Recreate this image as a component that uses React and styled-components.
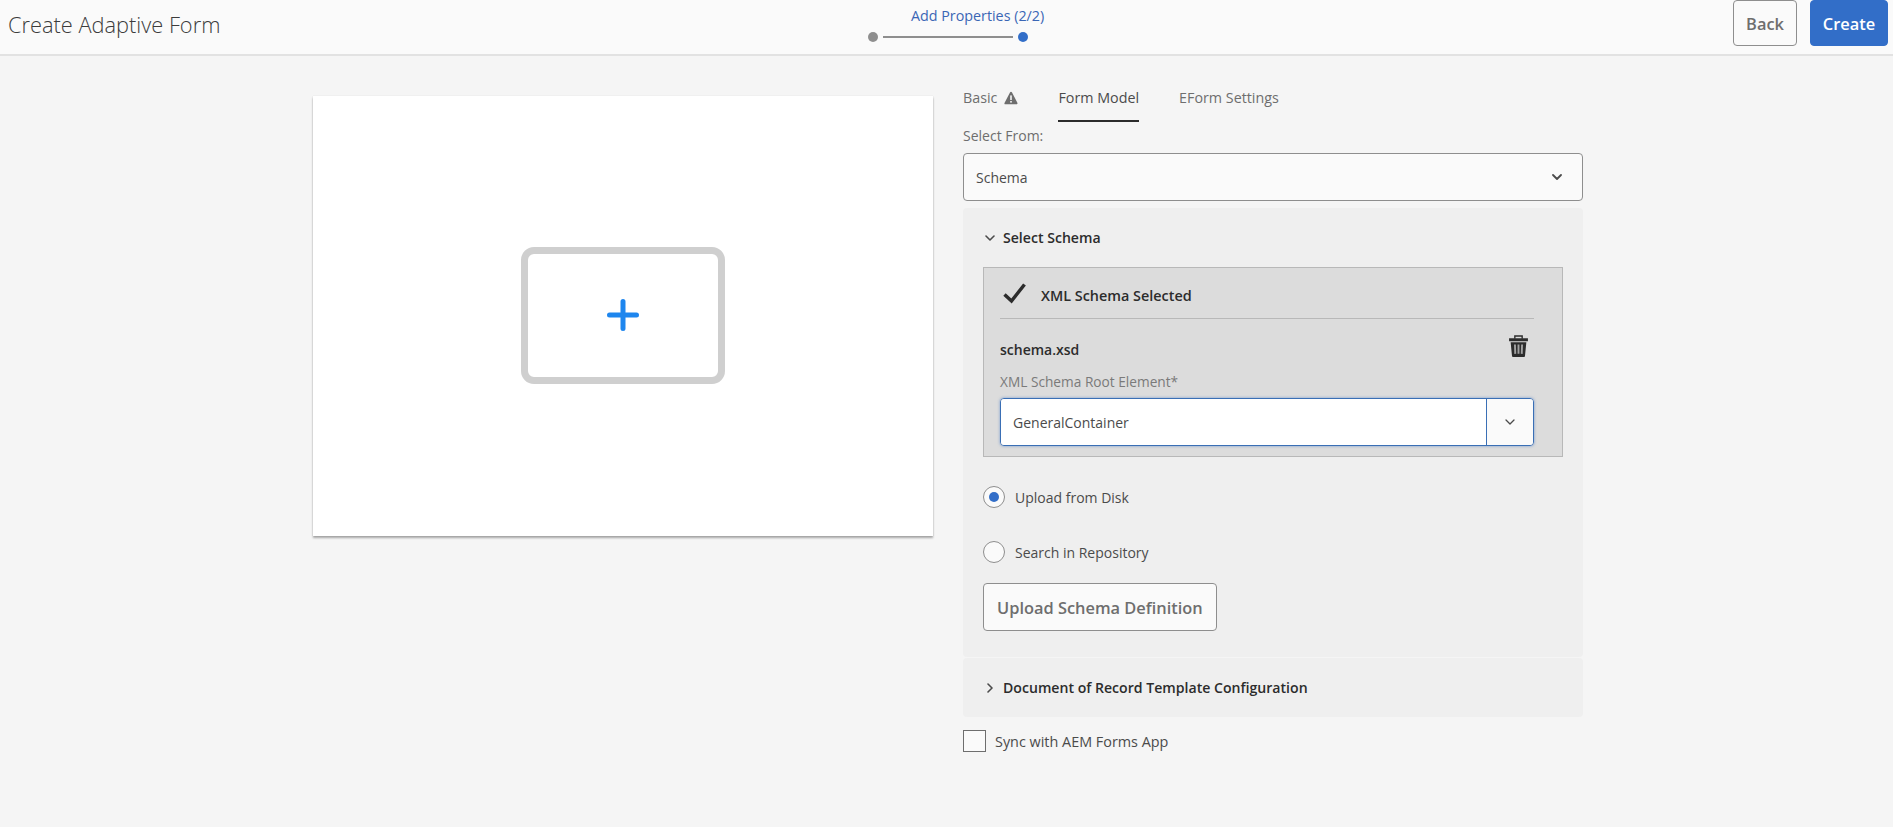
import React from 'react'
import styled, { createGlobalStyle } from 'styled-components'

const GlobalStyle = createGlobalStyle`
  html, body {
    margin: 0;
    padding: 0;
    background: #f5f5f5;
  }
  body {
    font-family: "Open Sans", "Liberation Sans", sans-serif;
    font-size: 14px;
    color: #4b4b4b;
  }
`

const Page = styled.div`
  width: 1893px;
  height: 827px;
  overflow: hidden;
  background: #f5f5f5;
`

const Header = styled.header`
  position: relative;
  height: 54px;
  display: flex;
  align-items: flex-start;
  justify-content: space-between;
  padding: 0 5px 0 8px;
  background: #fafafa;
  border-bottom: 2px solid #e2e2e2;
`

const Title = styled.h1`
  margin: 10px 0 0;
  font-size: 21.8px;
  line-height: 30px;
  font-weight: 300;
  color: #3c3c3c;
`

const Stepper = styled.div`
  position: absolute;
  left: 868px;
  top: 6px;
  width: 160px;
  display: flex;
  flex-direction: column;
`

const StepLabel = styled.div`
  margin-left: 43px;
  font-size: 14.3px;
  line-height: 20px;
  white-space: nowrap;
  color: #3a66b5;
`

const StepTrack = styled.div`
  margin-top: 6px;
  width: 100%;
  display: flex;
  align-items: center;
  gap: 5px;
`

const StepDot = styled.span`
  width: 10px;
  height: 10px;
  border-radius: 50%;
  background: ${p => (p.$active ? '#326ec8' : '#8e8e8e')};
`

const StepLine = styled.span`
  flex: 1;
  height: 2px;
  background: #8e8e8e;
`

const HeaderActions = styled.div`
  display: flex;
  gap: 13px;
`

const Button = styled.button`
  height: ${p => p.$height || 46}px;
  padding: 0 ${p => p.$pad || 0}px;
  width: ${p => (p.$width ? p.$width + 'px' : 'auto')};
  border-radius: 4px;
  border: 1px solid ${p => (p.$primary ? '#326ec8' : '#8e8e8e')};
  background: ${p => (p.$primary ? '#326ec8' : '#fafafa')};
  color: ${p => (p.$primary ? '#fff' : '#6e6e6e')};
  font-family: inherit;
  font-size: 16.4px;
  font-weight: 600;
  white-space: nowrap;
`

const Main = styled.main`
  display: flex;
  align-items: flex-start;
  gap: 30px;
  padding-left: 313px;
`

const PreviewCard = styled.div`
  margin-top: 40px;
  width: 620px;
  height: 440px;
  display: flex;
  align-items: center;
  justify-content: center;
  background: #fff;
  box-shadow: 0 2px 2px rgba(0, 0, 0, 0.32), 0 0 1px rgba(0, 0, 0, 0.12);
`

const PlusTile = styled.div`
  width: 204px;
  height: 137px;
  box-sizing: border-box;
  margin-top: -2px;
  border: 7px solid #cfcfcf;
  border-radius: 13px;
  display: flex;
  align-items: center;
  justify-content: center;
`

const Form = styled.div`
  width: 620px;
`

const Tabs = styled.nav`
  height: 66px;
  display: flex;
  gap: 40px;
`

const Tab = styled.div`
  height: 66px;
  padding-top: 31px;
  box-sizing: border-box;
  display: flex;
  align-items: flex-start;
  gap: 7px;
  line-height: 22px;
  font-size: 14.3px;
  color: ${p => (p.$active ? '#4b4b4b' : '#6e6e6e')};
  border-bottom: 2px solid ${p => (p.$active ? '#2c2c2c' : 'transparent')};
`

const FieldLabel = styled.div`
  font-size: ${p => (p.$muted ? 13.7 : 14)}px;
  line-height: 20px;
  margin: ${p => p.$margin || '4px 0 7px'};
  color: ${p => (p.$muted ? '#7a7a7a' : '#6e6e6e')};
`

const Select = styled.div`
  height: 48px;
  box-sizing: border-box;
  display: flex;
  align-items: center;
  justify-content: space-between;
  padding: 0 20px 0 12px;
  background: #fafafa;
  border: 1px solid #8e8e8e;
  border-radius: 4px;
  color: #4b4b4b;
`

const Panel = styled.section`
  margin-top: ${p => p.$top || 1}px;
  padding: 0 20px;
  background: #efefef;
  border-radius: 4px;
`

const PanelHeader = styled.div`
  height: ${p => p.$height}px;
  padding-left: 2px;
  display: flex;
  align-items: center;
  gap: 8px;
  font-size: 14.1px;
  font-weight: 600;
  color: #2c2c2c;
`

const SchemaBox = styled.div`
  padding: 0 28px 10px 16px;
  background: #dcdcdc;
  border: 1px solid #b8b8b8;
`

const SelectedRow = styled.div`
  height: 51px;
  box-sizing: border-box;
  padding: 4px 0 0 3px;
  display: flex;
  align-items: center;
  gap: 15px;
  font-size: 14.4px;
  font-weight: 600;
  color: #2c2c2c;
  border-bottom: 1px solid #b8b8b8;
`

const FileRow = styled.div`
  height: 60px;
  display: flex;
  align-items: center;
  justify-content: space-between;
  padding-right: 6px;
  font-weight: 600;
  color: #2c2c2c;
`

const Combo = styled.div`
  height: 48px;
  box-sizing: border-box;
  display: flex;
  border: 1px solid #3a6fb5;
  border-radius: 4px;
  overflow: hidden;
  box-shadow: 0 0 3px rgba(50, 110, 200, 0.6);
`

const ComboInput = styled.div`
  flex: 1;
  display: flex;
  align-items: center;
  padding-left: 12px;
  background: #fff;
  color: #4b4b4b;
`

const ComboButton = styled.div`
  width: 46px;
  display: flex;
  align-items: center;
  justify-content: center;
  background: #fafafa;
  border-left: 1px solid #3a6fb5;
`

const RadioRow = styled.label`
  margin-top: ${p => p.$top}px;
  display: flex;
  align-items: center;
  gap: 10px;
  height: 22px;
  color: #4b4b4b;
`

const Radio = styled.span`
  width: 22px;
  height: 22px;
  box-sizing: border-box;
  border-radius: 50%;
  border: 1px solid #8e8e8e;
  background: #fafafa;
  display: flex;
  align-items: center;
  justify-content: center;
  &::after {
    content: '';
    display: ${p => (p.$checked ? 'block' : 'none')};
    width: 10px;
    height: 10px;
    border-radius: 50%;
    background: #326ec8;
  }
`

const UploadWrap = styled.div`
  margin-top: 20px;
  padding-bottom: 26px;
`

const CheckRow = styled.label`
  margin-top: 13px;
  display: flex;
  align-items: center;
  gap: 9px;
  font-size: 14.4px;
  color: #4b4b4b;
`

const Checkbox = styled.span`
  width: 23px;
  height: 22px;
  box-sizing: border-box;
  border: 1px solid #6e6e6e;
  background: #fafafa;
`

const CheckIcon = styled.svg`
  margin-top: -3px;
`

const TrashIcon = styled.svg`
  margin-top: -6px;
`

const WarningIcon = styled.svg`
  margin-top: 4px;
`

const Chevron = ({ dir = 'down', size = 10, color = '#4b4b4b', width = 1.6 }) => (
  <svg width={size} height={size} viewBox="0 0 10 10" fill="none" stroke={color} strokeWidth={width} strokeLinecap="round" strokeLinejoin="round">
    <path d={dir === 'down' ? 'M1 3l4 4 4-4' : 'M3 1l4 4-4 4'} />
  </svg>
)

const Warning = () => (
  <WarningIcon width="14" height="14" viewBox="0 0 14 14">
    <path d="M7 .8c.4 0 .7.2.9.5l5.6 10.6c.3.6-.1 1.3-.8 1.3H1.3c-.7 0-1.1-.7-.8-1.3L6.1 1.3c.2-.3.5-.5.9-.5z" fill="#6e6e6e" />
    <rect x="6.2" y="4.4" width="1.6" height="4.6" fill="#f5f5f5" />
    <rect x="6.2" y="10" width="1.6" height="1.6" fill="#f5f5f5" />
  </WarningIcon>
)

const Check = () => (
  <CheckIcon width="23" height="21" viewBox="0 0 23 21" fill="none" stroke="#2c2c2c" strokeWidth="3.5" strokeLinejoin="miter">
    <path d="M1.5 11.5L8.5 18L21.5 1.5" />
  </CheckIcon>
)

const Trash = () => (
  <TrashIcon width="19" height="22" viewBox="0 0 18 21">
    <path fill="none" stroke="#2c2c2c" strokeWidth="1.3" d="M5.5 3.5V1h7v2.5" />
    <path fill="#2c2c2c" d="M0 3h18v3H0zM1.5 7h15l-1.3 13a1 1 0 0 1-1 1H3.8a1 1 0 0 1-1-1z" />
    <path stroke="#a2a2a2" strokeWidth="1.8" d="M5.6 9l.3 9M9 9v9M12.4 9l-.3 9" />
  </TrashIcon>
)

const Plus = () => (
  <svg width="32" height="32" viewBox="0 0 32 32" stroke="#1e86ee" strokeWidth="5" strokeLinecap="round">
    <path d="M16 2.5v27M2.5 16h27" />
  </svg>
)

export default function App() {
  return (
    <Page>
      <GlobalStyle />
      <Header>
        <Title>Create Adaptive Form</Title>
        <Stepper>
          <StepLabel>Add Properties (2/2)</StepLabel>
          <StepTrack>
            <StepDot />
            <StepLine />
            <StepDot $active />
          </StepTrack>
        </Stepper>
        <HeaderActions>
          <Button $width={64}>Back</Button>
          <Button $primary $width={78}>Create</Button>
        </HeaderActions>
      </Header>
      <Main>
        <PreviewCard>
          <PlusTile><Plus /></PlusTile>
        </PreviewCard>
        <Form>
          <Tabs>
            <Tab>Basic <Warning /></Tab>
            <Tab $active>Form Model</Tab>
            <Tab>EForm Settings</Tab>
          </Tabs>
          <FieldLabel>Select From:</FieldLabel>
          <Select>
            Schema
            <Chevron width={1.8} />
          </Select>
          <Panel $top={7}>
            <PanelHeader $height={59}>
              <Chevron />
              Select Schema
            </PanelHeader>
            <SchemaBox>
              <SelectedRow>
                <Check />
                XML Schema Selected
              </SelectedRow>
              <FileRow>
                schema.xsd
                <Trash />
              </FileRow>
              <FieldLabel $muted $margin="-7px 0 6px">XML Schema Root Element*</FieldLabel>
              <Combo>
                <ComboInput>GeneralContainer</ComboInput>
                <ComboButton><Chevron width={1.3} /></ComboButton>
              </Combo>
            </SchemaBox>
            <RadioRow $top={29}>
              <Radio $checked />
              Upload from Disk
            </RadioRow>
            <RadioRow $top={33}>
              <Radio />
              Search in Repository
            </RadioRow>
            <UploadWrap>
              <Button $height={48} $pad={13}>Upload Schema Definition</Button>
            </UploadWrap>
          </Panel>
          <Panel>
            <PanelHeader $height={59}>
              <Chevron dir="right" />
              Document of Record Template Configuration
            </PanelHeader>
          </Panel>
          <CheckRow>
            <Checkbox />
            Sync with AEM Forms App
          </CheckRow>
        </Form>
      </Main>
    </Page>
  )
}
